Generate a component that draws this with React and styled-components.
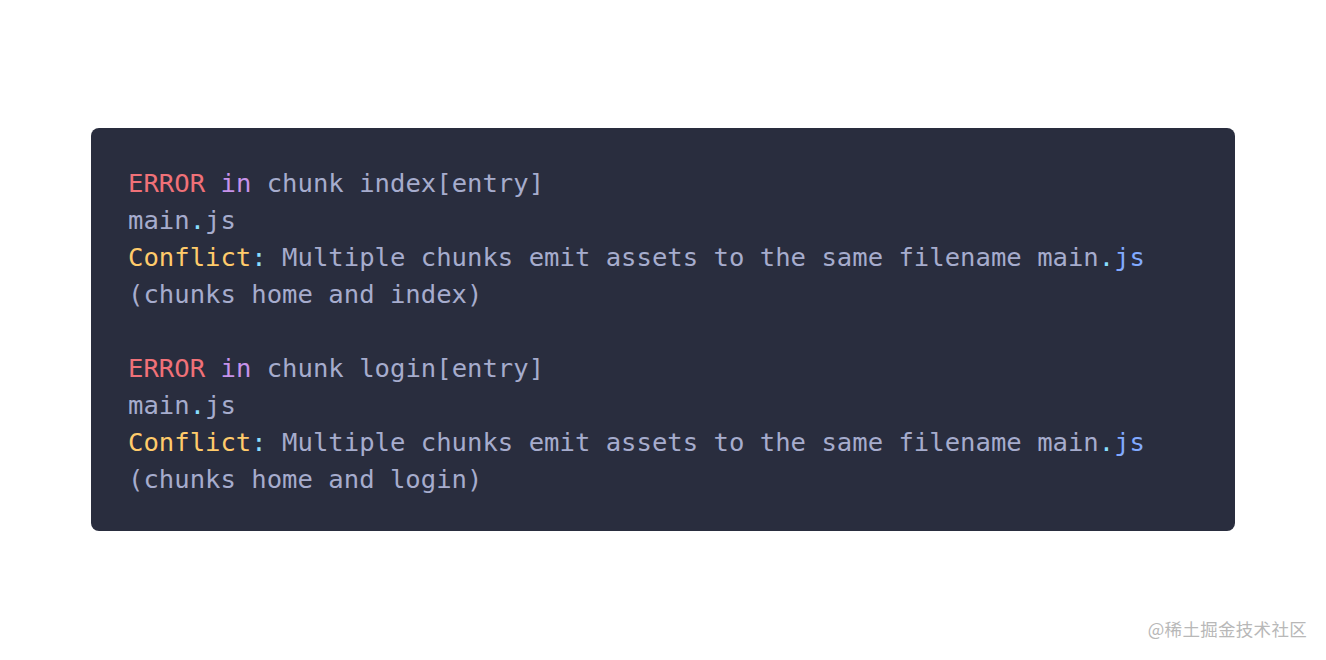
import React from "react";
import styled, { createGlobalStyle } from "styled-components";

const GlobalStyle = createGlobalStyle`
  html, body { margin: 0; padding: 0; background: #ffffff; }
  body { font-family: "Noto Sans", "Noto Sans CJK SC", sans-serif; }
`;

const Page = styled.div`
  position: relative;
  width: 1326px;
  height: 660px;
  box-sizing: border-box;
  padding: 128px 91px 0 91px;
`;

const CodeCard = styled.pre`
  margin: 0;
  background: #292d3e;
  border-radius: 8px;
  padding: 37px 37px 33px 37px;
  font-family: "DejaVu Sans Mono", "Liberation Mono", monospace;
  font-size: 25.6px;
  line-height: 37px;
  color: #a6accd;
  white-space: pre;
`;

const Line = styled.div`
  height: 37px;
`;

const Tok = styled.span`
  color: ${(p) =>
    ({
      error: "#f07178",
      keyword: "#c792ea",
      label: "#ffcb6b",
      punct: "#89ddff",
      prop: "#82aaff",
    }[p.$kind] || "#a6accd")};
`;

const Watermark = styled.div`
  position: absolute;
  right: 19px;
  bottom: 19px;
  font-family: "Noto Sans CJK SC", "Noto Sans", sans-serif;
  font-size: 17.5px;
  color: #b8b8b8;
  letter-spacing: 0.3px;
`;

function ErrorBlock({ chunk, other }) {
  return (
    <>
      <Line>
        <Tok $kind="error">ERROR</Tok> <Tok $kind="keyword">in</Tok> chunk {chunk}[entry]
      </Line>
      <Line>
        main<Tok $kind="punct">.</Tok>js
      </Line>
      <Line>
        <Tok $kind="label">Conflict</Tok>
        <Tok $kind="punct">:</Tok> Multiple chunks emit assets to the same filename main
        <Tok $kind="punct">.</Tok>
        <Tok $kind="prop">js</Tok>
      </Line>
      <Line>(chunks home and {other})</Line>
    </>
  );
}

export default function App() {
  return (
    <>
      <GlobalStyle />
      <Page>
        <CodeCard>
          <ErrorBlock chunk="index" other="index" />
          <Line />
          <ErrorBlock chunk="login" other="login" />
        </CodeCard>
        <Watermark>@稀土掘金技术社区</Watermark>
      </Page>
    </>
  );
}
